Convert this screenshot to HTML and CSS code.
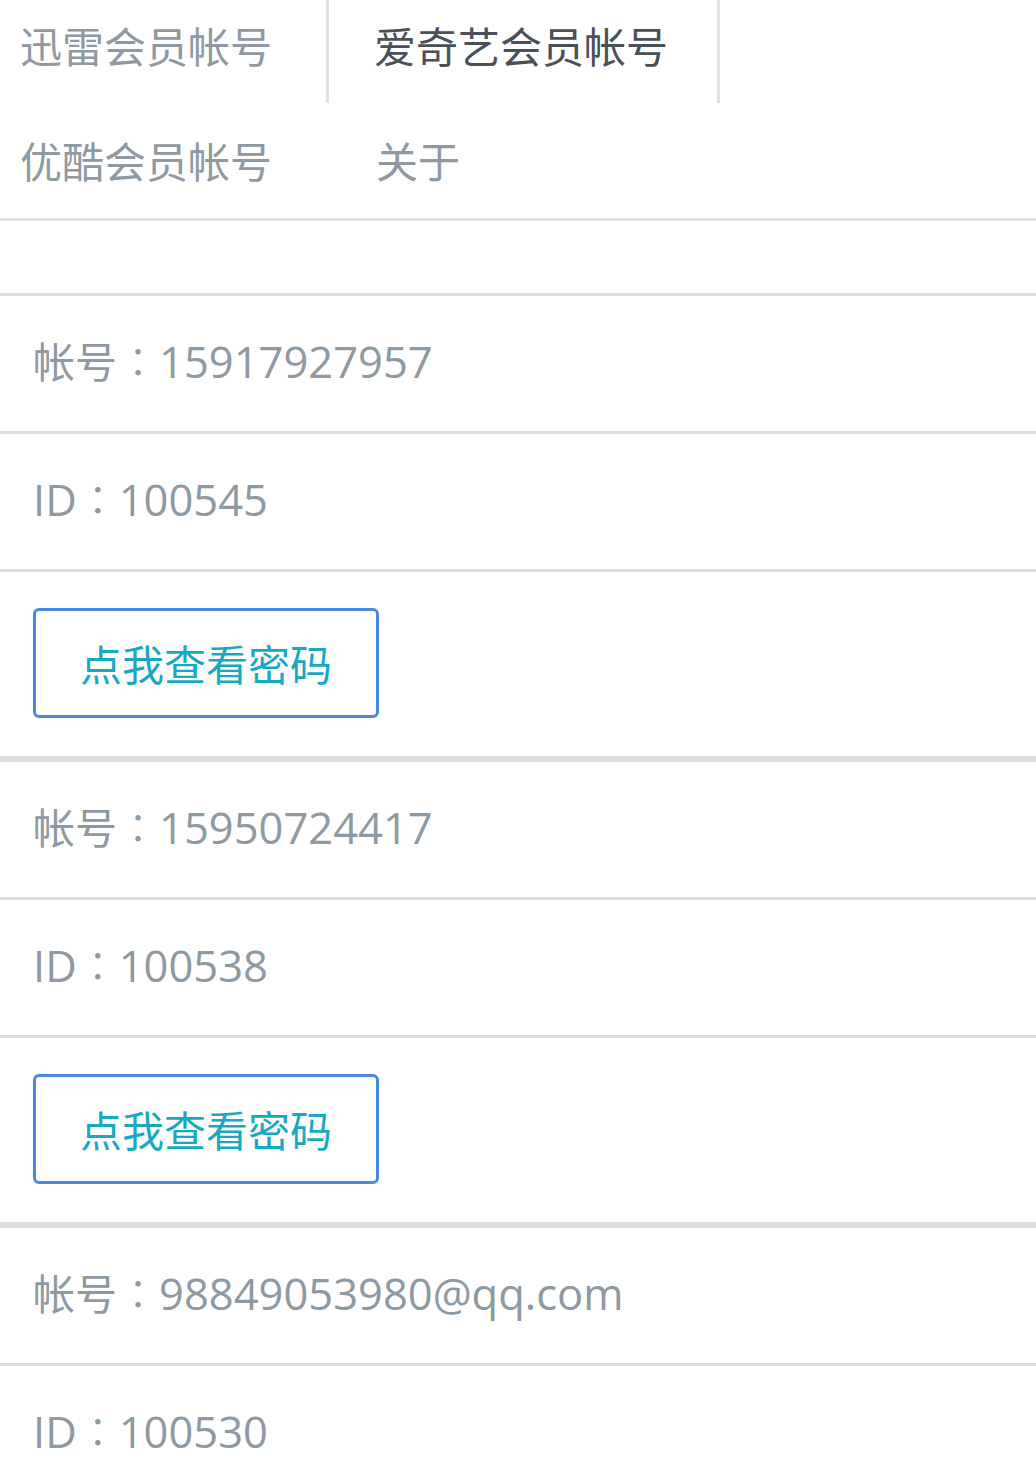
FILE: index.html
```html
<!DOCTYPE html>
<html lang="zh-CN">
<head>
<meta charset="utf-8">
<title>会员帐号</title>
<link rel="stylesheet" href="styles.css">
</head>
<body>
<nav class="tabs">
  <a class="tab tab-first">迅雷会员帐号</a>
  <a class="tab tab-active">爱奇艺会员帐号</a>
  <a class="tab tab-first">优酷会员帐号</a>
  <a class="tab tab-second">关于</a>
</nav>
<div class="content">
  <div class="account">
    <div class="item"><span class="label">帐号</span><span class="colon" lang="zh-TW">：</span><span class="value">15917927957</span></div>
    <div class="item"><span class="value">ID</span><span class="colon" lang="zh-TW">：</span><span class="value">100545</span></div>
    <div class="item item-btn"><button class="btn">点我查看密码</button></div>
  </div>
  <div class="account">
    <div class="item"><span class="label">帐号</span><span class="colon" lang="zh-TW">：</span><span class="value">15950724417</span></div>
    <div class="item"><span class="value">ID</span><span class="colon" lang="zh-TW">：</span><span class="value">100538</span></div>
    <div class="item item-btn"><button class="btn">点我查看密码</button></div>
  </div>
  <div class="account">
    <div class="item"><span class="label">帐号</span><span class="colon" lang="zh-TW">：</span><span class="value">98849053980@qq.com</span></div>
    <div class="item"><span class="value">ID</span><span class="colon" lang="zh-TW">：</span><span class="value">100530</span></div>
    <div class="item item-btn"><button class="btn">点我查看密码</button></div>
  </div>
</div>
</body>
</html>
```
FILE: styles.css
```css
html, body {
  margin: 0;
  padding: 0;
  background: #fff;
  overflow: hidden;
}
body {
  font-family: "Open Sans", "Noto Sans CJK SC", sans-serif;
  font-size: 42px;
  color: #8e99a2;
}
.tabs {
  display: flex;
  flex-wrap: wrap;
  margin-top: -12px;
  border-bottom: 3px solid #dee2e6;
}
.tab {
  box-sizing: border-box;
  display: block;
  font-family: "Noto Sans CJK SC", sans-serif;
  line-height: 63px;
  padding: 22px 0 27px 0;
  border: 3px solid transparent;
  border-bottom: 0;
  color: #8e99a2;
  white-space: nowrap;
}
.tab-first {
  width: 326px;
  padding-left: 17px;
}
.tab-active {
  width: 394px;
  padding-left: 45px;
  border-color: #dee2e6;
  border-radius: 10px 10px 0 0;
  color: #495057;
}
.tab-second {
  width: 394px;
  padding-left: 47px;
}
.tabs::after {
  content: "";
  flex: 1 0 0;
}
.content {
  margin-top: 72px;
}
.account {
  border-top: 3px solid #dddddd;
}
.item {
  height: 63px;
  line-height: 63px;
  padding: 32px 33px 40px 33px;
  border-bottom: 3px solid #dddddd;
  white-space: nowrap;
  overflow: visible;
}
.label {
  font-family: "Noto Sans CJK SC", sans-serif;
}
.colon {
  font-family: "Noto Sans CJK TC", sans-serif;
  font-weight: 300;
}
.value {
  font-family: "Open Sans", sans-serif;
  font-size: 43.5px;
}
.item-btn {
  height: auto;
  padding-top: 36px;
  padding-bottom: 38px;
  line-height: 0;
}
.btn {
  font-family: "Noto Sans CJK SC", sans-serif;
  font-size: 42px;
  line-height: 63px;
  color: #17a9c3;
  background: #fff;
  border: 3px solid #4a88df;
  border-radius: 6px;
  padding: 20px 44px 21px 44px;
  margin: 0;
}
```
